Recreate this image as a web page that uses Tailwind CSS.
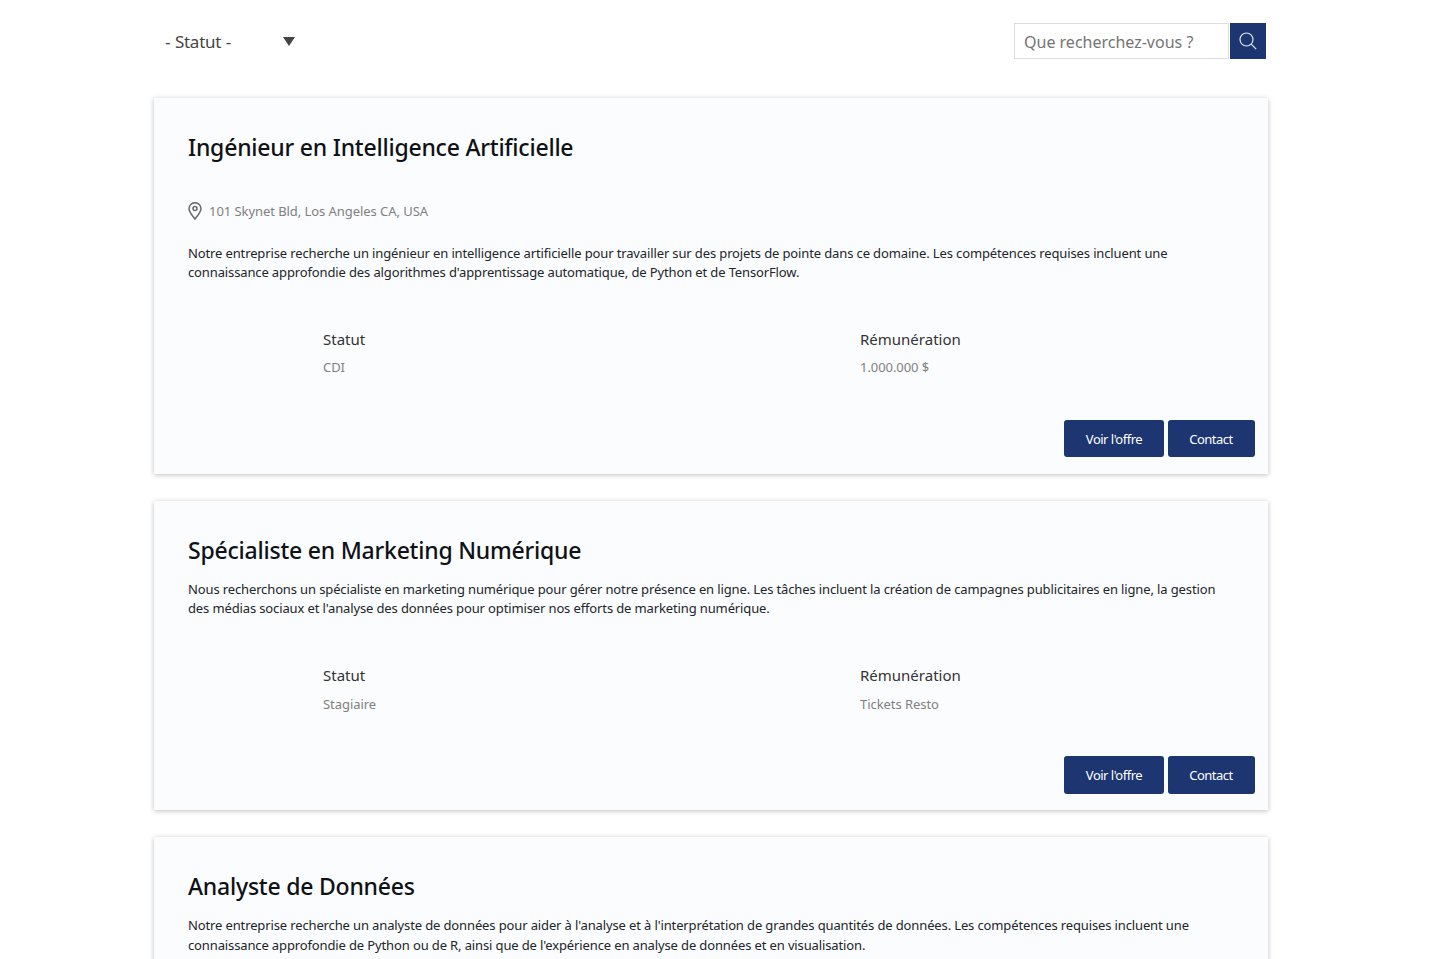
<!DOCTYPE html>
<html lang="fr">
  <head>
    <meta charset="UTF-8" />
    <title>Offres d'emploi</title>
    <script src="https://cdn.jsdelivr.net/npm/@tailwindcss/browser@4"></script>
  </head>
  <body class="bg-white font-['Noto_Sans',sans-serif] h-[959px] overflow-hidden">
    <div class="w-[1114px] ml-[154px]">
      <!-- filtres -->
      <div class="flex justify-between items-start h-[98px] pt-[23px] pl-[11px] pr-[2px]">
        <div class="flex items-center h-[36px] w-[130px] justify-between">
          <span class="pt-[2px] text-[17px] text-[#444] tracking-[-0.25px] [word-spacing:0.5px]">- Statut -</span>
          <svg class="w-[12px] h-[9px]" viewBox="0 0 12 9"><path d="M0 0h12L6 9z" fill="#444" /></svg>
        </div>
        <div class="flex">
          <div class="w-[215px] h-[36px] border border-[#ddd] flex items-center pl-[9px] pt-[2px] text-[16px] text-[#757575]">Que recherchez-vous ?</div>
          <button class="ml-px w-[36px] h-[36px] bg-[#1d3570] flex items-center justify-center">
            <svg class="w-[18px] h-[18px]" viewBox="0 0 18 18" fill="none" stroke="#dfe6f5" stroke-width="1.2"><circle cx="7.5" cy="7.5" r="6.5" /><path d="M12.2 12.2L17.2 17.2" /></svg>
          </button>
        </div>
      </div>

      <!-- carte 1 -->
      <div class="bg-[#fbfcfe] h-[376px] mb-[27px] shadow-[0_1px_5px_rgba(0,0,0,0.25)] pl-[34px] pr-[13px] pt-[32px]">
        <h2 class="text-[23px] leading-[34px] font-medium text-[#0f1115] tracking-[-0.22px]">Ingénieur en Intelligence Artificielle</h2>
        <div class="flex items-center mt-[36px] h-[24px] text-[13px] text-[#808080] tracking-[-0.06px]">
          <svg class="w-[14px] h-[18px] mr-[7px] mb-[3px]" viewBox="0 0 14 18" fill="none" stroke="#6b6b6b" stroke-width="1.5"><path d="M7 17C4 13 1 10 1 6.7A6 6 0 0 1 13 6.7C13 10 10 13 7 17z" /><circle cx="7" cy="6.6" r="2" /></svg>
          101 Skynet Bld, Los Angeles CA, USA
        </div>
        <p class="mt-[20px] text-[13px] leading-[19px] text-[#212529] tracking-[-0.13px] w-[1040px]">Notre entreprise recherche un ingénieur en intelligence artificielle pour travailler sur des projets de pointe dans ce domaine. Les compétences requises incluent une connaissance approfondie des algorithmes d'apprentissage automatique, de Python et de TensorFlow.</p>
        <div class="grid grid-cols-[537px_1fr] pl-[135px] mt-[45px]">
          <div>
            <div class="text-[15px] leading-[24px] text-[#333]">Statut</div>
            <div class="mt-[4px] text-[13px] leading-[24px] text-[#808080] tracking-[-0.06px]">CDI</div>
          </div>
          <div>
            <div class="text-[15px] leading-[24px] text-[#333]">Rémunération</div>
            <div class="mt-[4px] text-[13px] leading-[24px] text-[#808080] tracking-[-0.06px]">1.000.000 $</div>
          </div>
        </div>
        <div class="flex justify-end gap-[4px] mt-[41px]">
          <button class="w-[100px] h-[37px] pt-[2px] bg-[#1d3570] rounded-[3px] text-[13px] text-white tracking-[-0.5px]">Voir l'offre</button>
          <button class="w-[87px] h-[37px] pt-[2px] pr-[1px] bg-[#1d3570] rounded-[3px] text-[13px] text-white tracking-[-0.5px]">Contact</button>
        </div>
      </div>

      <!-- carte 2 -->
      <div class="bg-[#fbfcfe] h-[309px] mb-[27px] shadow-[0_1px_5px_rgba(0,0,0,0.25)] pl-[34px] pr-[13px] pt-[32px]">
        <h2 class="text-[23px] leading-[34px] font-medium text-[#0f1115] tracking-[-0.22px]">Spécialiste en Marketing Numérique</h2>
        <p class="mt-[13px] text-[13px] leading-[19px] text-[#212529] tracking-[-0.13px] w-[1040px]">Nous recherchons un spécialiste en marketing numérique pour gérer notre présence en ligne. Les tâches incluent la création de campagnes publicitaires en ligne, la gestion des médias sociaux et l'analyse des données pour optimiser nos efforts de marketing numérique.</p>
        <div class="grid grid-cols-[537px_1fr] pl-[135px] mt-[45px]">
          <div>
            <div class="text-[15px] leading-[24px] text-[#333]">Statut</div>
            <div class="mt-[5px] text-[13px] leading-[24px] text-[#808080] tracking-[-0.06px]">Stagiaire</div>
          </div>
          <div>
            <div class="text-[15px] leading-[24px] text-[#333]">Rémunération</div>
            <div class="mt-[5px] text-[13px] leading-[24px] text-[#808080] tracking-[-0.06px]">Tickets Resto</div>
          </div>
        </div>
        <div class="flex justify-end gap-[4px] mt-[40px]">
          <button class="w-[100px] h-[38px] pt-[2px] bg-[#1d3570] rounded-[3px] text-[13px] text-white tracking-[-0.5px]">Voir l'offre</button>
          <button class="w-[87px] h-[38px] pt-[2px] pr-[1px] bg-[#1d3570] rounded-[3px] text-[13px] text-white tracking-[-0.5px]">Contact</button>
        </div>
      </div>

      <!-- carte 3 -->
      <div class="bg-[#fbfcfe] h-[309px] shadow-[0_1px_5px_rgba(0,0,0,0.25)] pl-[34px] pr-[13px] pt-[32px]">
        <h2 class="text-[23px] leading-[34px] font-medium text-[#0f1115] tracking-[-0.22px]">Analyste de Données</h2>
        <p class="mt-[13px] text-[13px] leading-[19.5px] text-[#212529] tracking-[-0.13px] w-[1040px]">Notre entreprise recherche un analyste de données pour aider à l'analyse et à l'interprétation de grandes quantités de données. Les compétences requises incluent une connaissance approfondie de Python ou de R, ainsi que de l'expérience en analyse de données et en visualisation.</p>
      </div>
    </div>
  </body>
</html>
